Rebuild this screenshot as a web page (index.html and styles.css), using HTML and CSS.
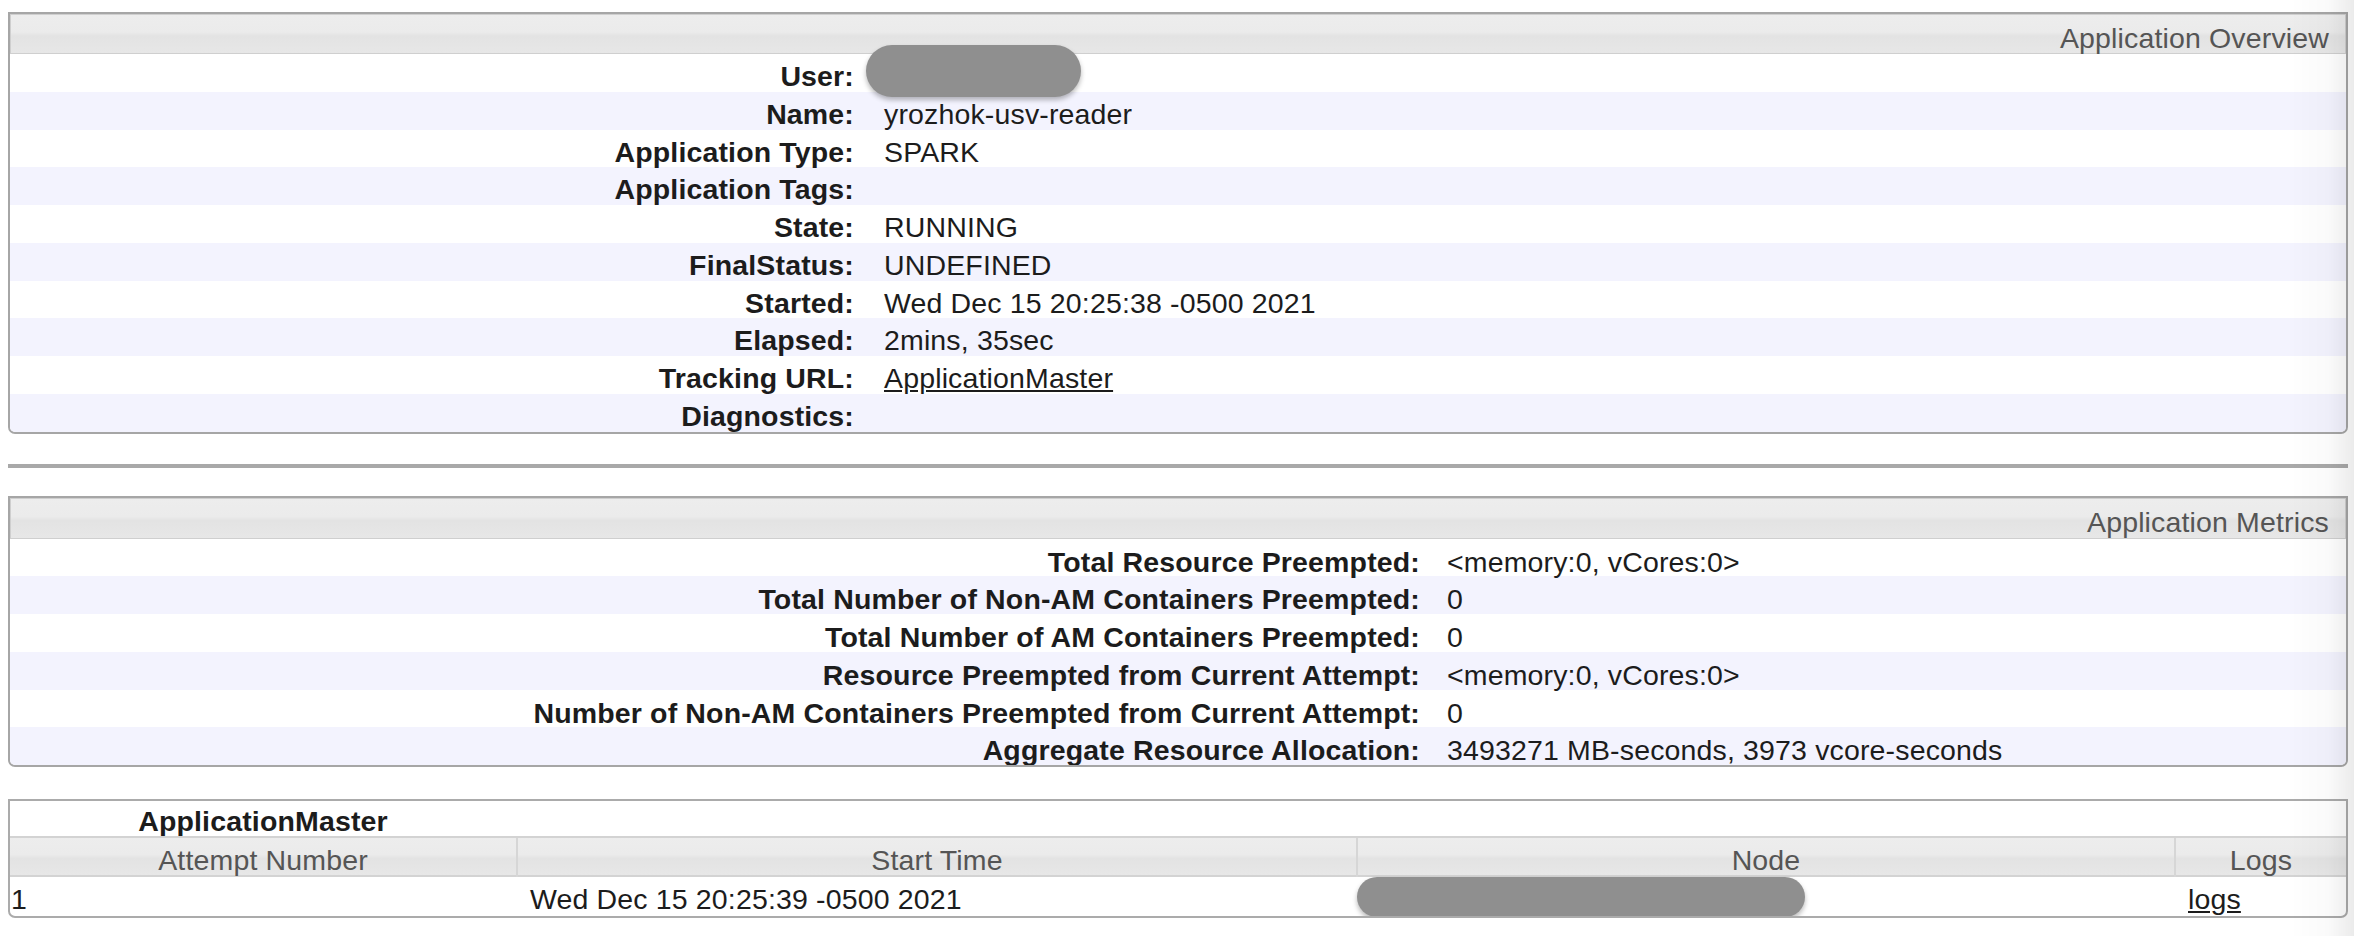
FILE: index.html
```html
<!DOCTYPE html>
<html lang="en">
<head>
<meta charset="utf-8">
<title>Application Overview</title>
<link rel="stylesheet" href="styles.css">
</head>
<body>
<div class="page">
  <section class="box">
    <div class="box-head">Application Overview</div>
    <div class="info info-overview">
      <div class="row"><div class="k">User:</div><div class="v"></div></div>
      <div class="row"><div class="k">Name:</div><div class="v">yrozhok-usv-reader</div></div>
      <div class="row"><div class="k">Application Type:</div><div class="v">SPARK</div></div>
      <div class="row"><div class="k">Application Tags:</div><div class="v"></div></div>
      <div class="row"><div class="k">State:</div><div class="v">RUNNING</div></div>
      <div class="row"><div class="k">FinalStatus:</div><div class="v">UNDEFINED</div></div>
      <div class="row"><div class="k">Started:</div><div class="v">Wed Dec 15 20:25:38 -0500 2021</div></div>
      <div class="row"><div class="k">Elapsed:</div><div class="v">2mins, 35sec</div></div>
      <div class="row"><div class="k">Tracking URL:</div><div class="v"><a href="#">ApplicationMaster</a></div></div>
      <div class="row"><div class="k">Diagnostics:</div><div class="v"></div></div>
      <span class="redact redact-user"></span>
    </div>
  </section>

  <div class="rule"></div>

  <section class="box">
    <div class="box-head box-head-metrics">Application Metrics</div>
    <div class="info info-metrics">
      <div class="row"><div class="k">Total Resource Preempted:</div><div class="v">&lt;memory:0, vCores:0&gt;</div></div>
      <div class="row"><div class="k">Total Number of Non-AM Containers Preempted:</div><div class="v">0</div></div>
      <div class="row"><div class="k">Total Number of AM Containers Preempted:</div><div class="v">0</div></div>
      <div class="row"><div class="k">Resource Preempted from Current Attempt:</div><div class="v">&lt;memory:0, vCores:0&gt;</div></div>
      <div class="row"><div class="k">Number of Non-AM Containers Preempted from Current Attempt:</div><div class="v">0</div></div>
      <div class="row"><div class="k">Aggregate Resource Allocation:</div><div class="v">3493271 MB-seconds, 3973 vcore-seconds</div></div>
    </div>
  </section>

  <section class="box attempts">
    <div class="cols cap-row"><div class="caption">ApplicationMaster</div></div>
    <div class="cols thead">
      <div class="th">Attempt Number</div>
      <div class="th">Start Time</div>
      <div class="th">Node</div>
      <div class="th">Logs</div>
    </div>
    <div class="cols tbody">
      <div class="td td-first">1</div>
      <div class="td">Wed Dec 15 20:25:39 -0500 2021</div>
      <div class="td"></div>
      <div class="td td-logs"><a href="#">logs</a></div>
      <span class="redact redact-node"></span>
    </div>
  </section>
</div>
<div class="edge-shade"></div>
</body>
</html>
```
FILE: styles.css
```css
html, body {
  margin: 0;
  padding: 0;
  background: #ffffff;
}

body {
  font-family: "Liberation Sans", Arial, Helvetica, sans-serif;
  font-size: 28.5px;
  letter-spacing: 0.15px;
  color: #1c1c1c;
}

a {
  color: #1c1c1c;
  text-decoration: underline;
}

.page {
  padding: 12px 6px 20px 8px;
}

.box {
  border: 2px solid #a6a6a6;
  border-radius: 0 0 7px 7px;
  overflow: hidden;
}

.box-head {
  height: 40px;
  box-sizing: border-box;
  border: 1px solid #cfcfcf;
  background: linear-gradient(#ededed 0%, #ebebeb 45%, #e3e3e3 55%, #e7e7e7 100%);
  display: flex;
  align-items: center;
  justify-content: flex-end;
  padding-right: 16px;
  padding-top: 9px;
  color: #555555;
  white-space: nowrap;
}

.box-head-metrics {
  height: 41px;
  padding-top: 8px;
}

.info {
  position: relative;
}

.row {
  display: grid;
  height: 37.75px;
  box-sizing: border-box;
  padding-top: 7px;
  line-height: 31.75px;
  white-space: nowrap;
}

.row:nth-child(even) {
  background: #f3f3fe;
}

.info-overview .row {
  grid-template-columns: 858px 1fr;
}

.info-metrics .row {
  grid-template-columns: 1424px 1fr;
  padding-top: 8px;
}

.k {
  text-align: right;
  font-weight: bold;
  padding-right: 14px;
}

.v {
  padding-left: 16px;
}

.info-metrics .v {
  padding-left: 13px;
}

.redact {
  position: absolute;
  background: #8f8f8f;
  box-shadow: 0 3px 5px rgba(0, 0, 0, 0.28);
}

.redact-user {
  left: 856px;
  top: -9px;
  width: 215px;
  height: 52px;
  border-radius: 26px;
}

.rule {
  height: 4px;
  background: #a9a9a9;
  margin: 30px 0 28px 0;
}

.attempts {
  margin-top: 32px;
  border-color: #ababab;
}

.cols {
  position: relative;
  display: grid;
  grid-template-columns: 506px 840px 818px 1fr;
  white-space: nowrap;
}

.cap-row {
  height: 35px;
  align-items: center;
  background: #ffffff;
}

.caption {
  text-align: center;
  font-weight: bold;
  padding-top: 4px;
}

.thead {
  height: 41px;
  box-sizing: border-box;
  border-top: 2px solid #d3d3d3;
  border-bottom: 2px solid #d3d3d3;
  background: linear-gradient(#ededed 0%, #ebebeb 45%, #e3e3e3 55%, #e7e7e7 100%);
  color: #555555;
}

.th {
  display: flex;
  align-items: center;
  justify-content: center;
  padding-top: 6px;
}

.th + .th {
  border-left: 2px solid #d6d6d6;
}

.tbody {
  height: 39px;
  align-items: center;
}

.td {
  padding-left: 14px;
  padding-top: 6px;
}

.td-first {
  padding-left: 1px;
}

.td-logs {
  padding-left: 14px;
}

.redact-node {
  left: 1347px;
  top: 0;
  width: 448px;
  height: 40px;
  border-radius: 20px;
}

.edge-shade {
  position: fixed;
  top: 0;
  right: 0;
  width: 64px;
  height: 100%;
  pointer-events: none;
  background: linear-gradient(to right, rgba(0, 0, 0, 0) 0%, rgba(0, 0, 0, 0.02) 60%, rgba(0, 0, 0, 0.08) 100%);
}
```
